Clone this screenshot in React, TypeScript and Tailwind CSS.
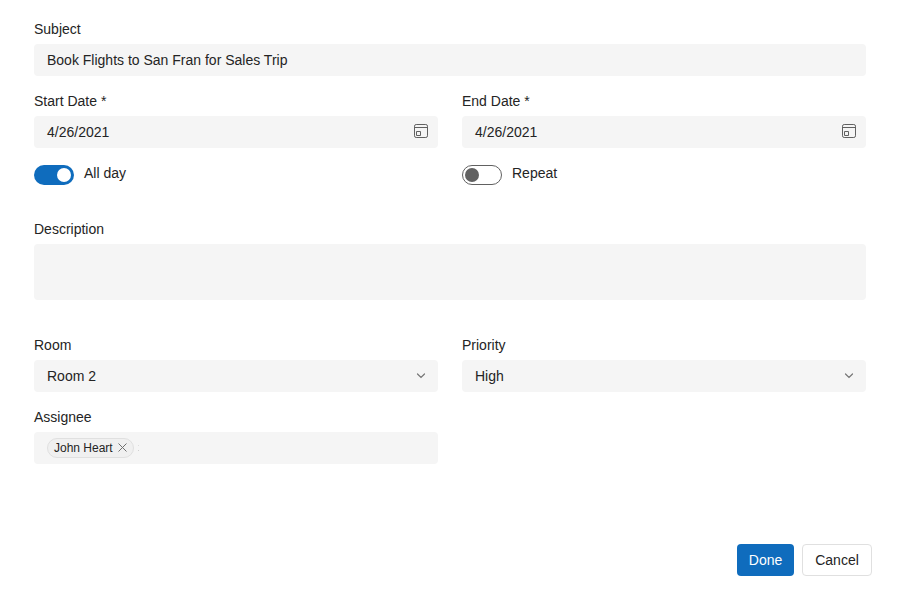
import React from "react";

function Label({ children }: { children: React.ReactNode }) {
  return <div className="h-6 pb-1 leading-[18px]">{children}</div>;
}

function Calendar() {
  return (
    <svg width="14" height="14" viewBox="0 0 14 14" fill="none" stroke="#616161" className="mb-[2px]">
      <rect x="0.5" y="0.5" width="13" height="13" rx="1.7" />
      <path d="M0.5 3.5H13.5M2.5 7.5H6.5V11.5H2.5Z" />
    </svg>
  );
}

function Chevron() {
  return (
    <svg width="14" height="14" viewBox="0 0 14 14" fill="none" stroke="#757575" strokeWidth="1.2" strokeLinecap="round">
      <path d="M3.5 5L7 8.4L10.5 5" />
    </svg>
  );
}

function Field({ label, value, icon }: { label: string; value: string; icon?: React.ReactNode }) {
  return (
    <div>
      <Label>{label}</Label>
      <div className="flex h-8 items-center justify-between rounded-[4px] bg-[#f5f5f5] pl-[13px] pr-[10px]">
        <span>{value}</span>
        {icon}
      </div>
    </div>
  );
}

function Toggle({ label, on }: { label: string; on?: boolean }) {
  return (
    <div className="flex h-5 gap-[10px]">
      {on ? (
        <div className="flex h-5 w-10 items-center justify-end rounded-full bg-[#0f6cbd] pr-[3px]">
          <div className="size-[14px] rounded-full bg-white" />
        </div>
      ) : (
        <div className="flex h-5 w-10 items-center rounded-full border border-[#616161] pl-[2px]">
          <div className="size-[14px] rounded-full bg-[#616161]" />
        </div>
      )}
      <span className="-mt-[1px] leading-[18px]">{label}</span>
    </div>
  );
}

export default function App() {
  return (
    <main className="flex h-[600px] w-[900px] flex-col bg-white pl-[34px] pr-7 pt-5 font-['Liberation_Sans',sans-serif] text-[14px] text-[#242424] antialiased">
      <div className="w-[832px]">
        <Field label="Subject" value="Book Flights to San Fran for Sales Trip" />
        <div className="mt-4 grid grid-cols-2 gap-x-6">
          <Field label="Start Date *" value="4/26/2021" icon={<Calendar />} />
          <Field label="End Date *" value="4/26/2021" icon={<Calendar />} />
        </div>
        <div className="mt-[17px] grid grid-cols-2 gap-x-6">
          <Toggle label="All day" on />
          <Toggle label="Repeat" />
        </div>
        <div className="mt-[35px]">
          <Label>Description</Label>
          <div className="h-14 rounded-[4px] bg-[#f5f5f5]" />
        </div>
        <div className="mt-9 grid grid-cols-2 gap-x-6 gap-y-4">
          <Field label="Room" value="Room 2" icon={<Chevron />} />
          <Field label="Priority" value="High" icon={<Chevron />} />
          <div>
            <Label>Assignee</Label>
            <div className="flex h-8 items-center rounded-[4px] bg-[#f5f5f5] pl-[13px]">
              <div className="flex h-5 w-[87px] items-center justify-between rounded-full border border-[#e0e0e0] bg-[#f0f0f0] pl-[6px] pr-[6px] text-[12px] leading-4">
                <span>John Heart</span>
                <svg width="9" height="9" viewBox="0 0 9 9" stroke="#707070" className="mb-px">
                  <path d="M0.5 0.5L8.5 8.5M8.5 0.5L0.5 8.5" />
                </svg>
              </div>
              <div className="ml-1 flex h-[6px] w-px flex-col justify-between">
                <i className="size-px bg-[#dedede]" />
                <i className="size-px bg-[#d0d0d0]" />
              </div>
            </div>
          </div>
        </div>
      </div>
      <div className="mt-20 flex justify-end gap-2">
        <button className="h-8 w-[57px] rounded-[4px] bg-[#0f6cbd] text-white">Done</button>
        <button className="h-8 w-[70px] rounded-[4px] border border-[#e0e0e0]">Cancel</button>
      </div>
    </main>
  );
}
